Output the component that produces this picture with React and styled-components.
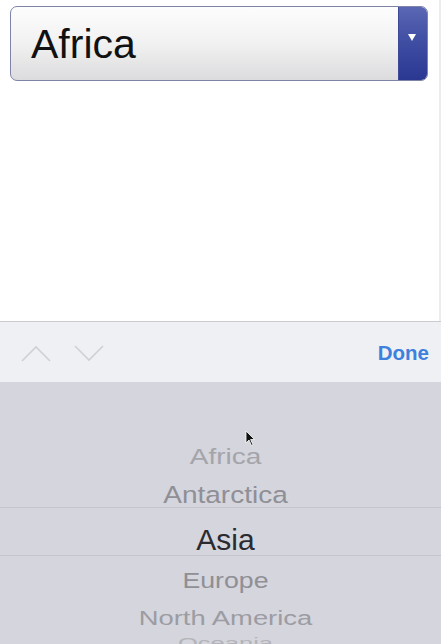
import styled, { createGlobalStyle } from "styled-components";

const GlobalStyle = createGlobalStyle`
  html, body {
    margin: 0;
    padding: 0;
    background: #ffffff;
  }
  body {
    font-family: "Liberation Sans", Arial, sans-serif;
  }
`;

const Screen = styled.div`
  width: 441px;
  height: 644px;
  display: flex;
  flex-direction: column;
  overflow: hidden;
`;

const Page = styled.div`
  height: 321px;
  padding: 6px 11px 0 10px;
  box-sizing: border-box;
  background: #ffffff;
  border-right: 2px solid #ececef;
`;

const Select = styled.div`
  display: flex;
  height: 75px;
  box-sizing: border-box;
  border: 1.5px solid #7d84a6;
  border-radius: 7px;
  overflow: hidden;
  background: linear-gradient(#fdfdfd 0%, #f1f1f1 50%, #dcdcde 100%);
`;

const SelectValue = styled.div`
  flex: 1;
  display: flex;
  align-items: center;
  padding: 2px 0 0 20px;
  font-size: 41px;
  color: #111111;
`;

const SelectButton = styled.div`
  width: 29px;
  display: flex;
  align-items: flex-start;
  justify-content: center;
  padding: 27px 3px 0 0;
  box-sizing: border-box;
  background: linear-gradient(#5a67b4 0%, #3e4ca2 50%, #2a3892 100%);
  border-left: 1px solid #3e4a98;
`;

const Toolbar = styled.div`
  height: 61px;
  box-sizing: border-box;
  border-top: 1px solid #cbcbcf;
  background: #eff0f4;
  display: flex;
  align-items: center;
  padding: 0 12px 0 21px;
`;

const Arrows = styled.div`
  display: flex;
  gap: 23px;
  flex: 1;
  padding-top: 2px;
`;

const Done = styled.div`
  font-size: 20.5px;
  font-weight: bold;
  color: #3d80dd;
  padding-top: 2px;
`;

const Picker = styled.div`
  position: relative;
  flex: 1;
  background: #d4d5dd;
  padding-top: 56px;
  overflow: hidden;
  display: flex;
  flex-direction: column;
`;

const Row = styled.div`
  flex: none;
  height: ${({ h }) => h}px;
  box-sizing: border-box;
  display: flex;
  align-items: center;
  justify-content: center;
  padding-left: 10px;
  border-top: ${({ selected }) => (selected ? "1px solid #c3c4cc" : "none")};
  border-bottom: ${({ selected }) => (selected ? "1px solid #c3c4cc" : "none")};
`;

const Item = styled.span`
  font-size: ${({ size }) => size}px;
  line-height: 1;
  color: ${({ color }) => color};
  white-space: nowrap;
  transform: translateY(${({ shift }) => shift || 0}px) scaleY(${({ squash }) => squash});
`;

const Cursor = styled.svg`
  position: absolute;
  left: 245px;
  top: 48px;
`;

const items = [
  { label: "Africa", h: 37, size: 28, squash: 0.78, color: "#a4a4aa" },
  { label: "Antarctica", h: 32, size: 28, squash: 0.87, color: "#8f8f95", shift: 4.5 },
  { label: "Asia", h: 49, size: 30, squash: 1, color: "#2a2a2f", shift: 7.5, selected: true },
  { label: "Europe", h: 48, size: 26.7, squash: 0.86, color: "#8f8f95" },
  { label: "North America", h: 27, size: 27.4, squash: 0.76, color: "#9c9ca2" },
  { label: "Oceania", h: 26, size: 25.5, squash: 0.55, color: "#b3b3b9" },
];

const App = () => {
  return (
    <Screen>
      <GlobalStyle />
      <Page>
        <Select>
          <SelectValue>Africa</SelectValue>
          <SelectButton>
            <svg width="8" height="7" viewBox="0 0 8 7">
              <path d="M0 0 H8 L4 7 Z" fill="#ffffff" />
            </svg>
          </SelectButton>
        </Select>
      </Page>
      <Toolbar>
        <Arrows>
          <svg width="30" height="17" viewBox="0 0 30 17">
            <path d="M1 16 L15 2 L29 16" fill="none" stroke="#cfd0d5" strokeWidth="1.6" />
          </svg>
          <svg width="30" height="17" viewBox="0 0 30 17">
            <path d="M1 1 L15 15 L29 1" fill="none" stroke="#cfd0d5" strokeWidth="1.6" />
          </svg>
        </Arrows>
        <Done>Done</Done>
      </Toolbar>
      <Picker>
        {items.map((it) => (
          <Row key={it.label} h={it.h} selected={it.selected}>
            <Item size={it.size} squash={it.squash} color={it.color} shift={it.shift}>
              {it.label}
            </Item>
          </Row>
        ))}
        <Cursor width="10" height="17" viewBox="0 0 10 17">
          <path d="M1 1 L1 13 L4 10 L6.5 15.5 L8 14.8 L5.6 9.5 L9.5 9.5 Z" fill="#111" stroke="#fff" strokeWidth="0.8" />
        </Cursor>
      </Picker>
    </Screen>
  );
};

export default App;
